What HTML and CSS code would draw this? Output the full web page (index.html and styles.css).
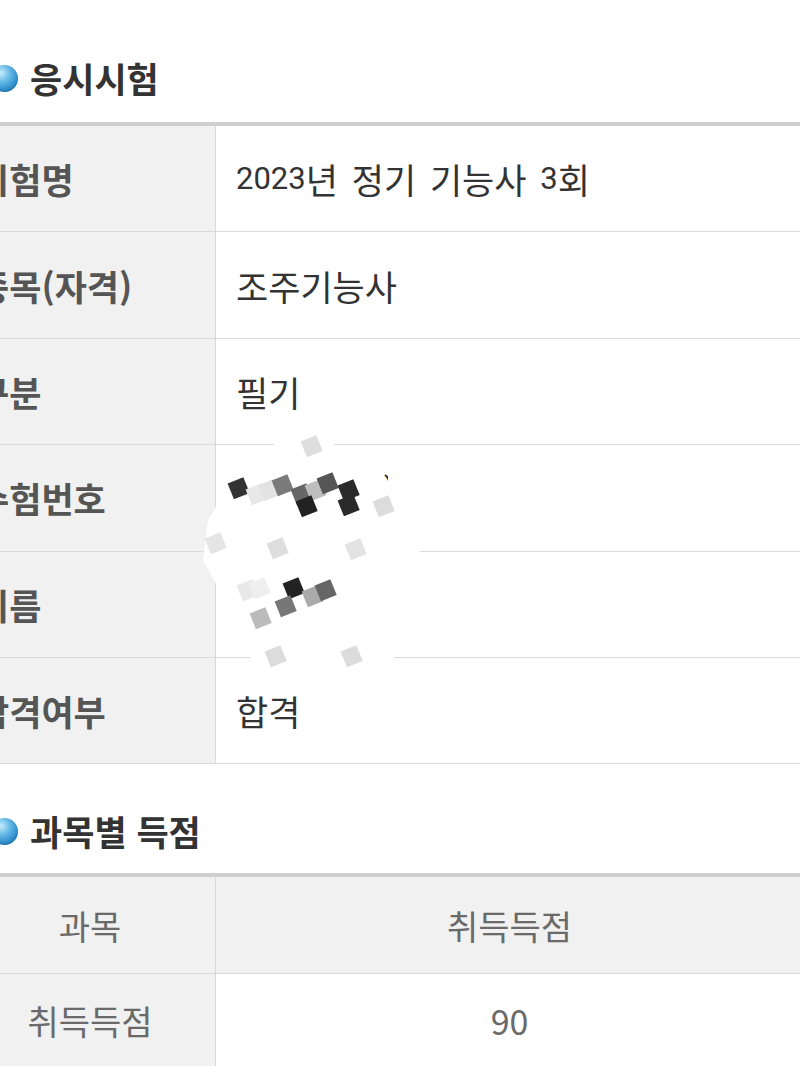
FILE: index.html
```html
<!DOCTYPE html>
<html lang="ko">
<head>
<meta charset="utf-8">
<title>응시시험</title>
<link rel="stylesheet" href="styles.css">
</head>
<body>
<div class="page">
  <section class="section">
    <h2 class="title"><span class="dot"></span>응시시험</h2>
    <div class="info">
      <div class="row"><div class="label">시험명</div><div class="value"><span class="num">2023</span>년 정기 기능사 <span class="num">3</span>회</div></div>
      <div class="row"><div class="label">종목(자격)</div><div class="value">조주기능사</div></div>
      <div class="row"><div class="label">구분</div><div class="value">필기</div></div>
      <div class="row"><div class="label">수험번호</div><div class="value"></div></div>
      <div class="row"><div class="label">이름</div><div class="value"></div></div>
      <div class="row"><div class="label">합격여부</div><div class="value">합격</div></div>
    </div>
  </section>
  <section class="section second">
    <h2 class="title"><span class="dot"></span>과목별 득점</h2>
    <div class="score">
      <div class="srow head"><div class="scell key">과목</div><div class="scell">취득득점</div></div>
      <div class="srow body"><div class="scell key">취득득점</div><div class="scell val">90</div></div>
    </div>
  </section>
</div>
<svg class="mosaic" width="800" height="1066" viewBox="0 0 800 1066" aria-hidden="true">
  <polygon fill="#ffffff" points="292,432 322,440 398,468 420,550 402,620 392,668 255,668 230,610 203,560 208,520 240,468"/>
  <text x="384" y="498" font-size="30" font-family="Roboto, sans-serif" fill="#222">)</text>
  <rect x="388" y="470" width="12" height="40" fill="#fff"/>
  <g>
    <rect x="230" y="480" width="17" height="17" fill="#333" transform="rotate(-22 238 488)"/>
    <rect x="248" y="486" width="17" height="17" fill="#e8e8e8" transform="rotate(-22 256 494)"/>
    <rect x="260" y="482" width="17" height="17" fill="#e3e3e3" transform="rotate(-22 268 490)"/>
    <rect x="274" y="477" width="17" height="17" fill="#7a7a7a" transform="rotate(-22 282 485)"/>
    <rect x="293" y="486" width="17" height="17" fill="#666" transform="rotate(-22 301 494)"/>
    <rect x="307" y="482" width="17" height="17" fill="#bdbdbd" transform="rotate(-22 315 490)"/>
    <rect x="319" y="475" width="17" height="17" fill="#555" transform="rotate(-22 327 483)"/>
    <rect x="298" y="498" width="17" height="17" fill="#222" transform="rotate(-22 306 506)"/>
    <rect x="340" y="482" width="17" height="17" fill="#2a2a2a" transform="rotate(-22 348 490)"/>
    <rect x="340" y="497" width="17" height="17" fill="#2a2a2a" transform="rotate(-22 348 505)"/>
    <rect x="375" y="498" width="17" height="17" fill="#dcdcdc" transform="rotate(-22 383 506)"/>
    <rect x="303" y="438" width="17" height="17" fill="#dedede" transform="rotate(-22 311 446)"/>
    <rect x="207" y="535" width="17" height="17" fill="#e5e5e5" transform="rotate(-22 215 543)"/>
    <rect x="269" y="540" width="17" height="17" fill="#dedede" transform="rotate(-22 277 548)"/>
    <rect x="347" y="541" width="17" height="17" fill="#e3e3e3" transform="rotate(-22 355 549)"/>
    <rect x="239" y="582" width="17" height="17" fill="#e8e8e8" transform="rotate(-22 247 590)"/>
    <rect x="251" y="580" width="17" height="17" fill="#efefef" transform="rotate(-22 259 588)"/>
    <rect x="285" y="580" width="17" height="17" fill="#222" transform="rotate(-22 293 588)"/>
    <rect x="277" y="598" width="17" height="17" fill="#777" transform="rotate(-22 285 606)"/>
    <rect x="304" y="588" width="17" height="17" fill="#aaa" transform="rotate(-22 312 596)"/>
    <rect x="317" y="582" width="17" height="17" fill="#666" transform="rotate(-22 325 590)"/>
    <rect x="252" y="610" width="17" height="17" fill="#bbb" transform="rotate(-22 260 618)"/>
    <rect x="267" y="648" width="17" height="17" fill="#dcdcdc" transform="rotate(-22 275 656)"/>
    <rect x="343" y="648" width="17" height="17" fill="#dcdcdc" transform="rotate(-22 351 656)"/>
  </g>
</svg>
</body>
</html>
```
FILE: styles.css
```css
html, body {
  margin: 0;
  padding: 0;
  background: #ffffff;
  overflow: hidden;
}

body {
  width: 800px;
  height: 1066px;
  font-family: "Noto Sans CJK KR", "Noto Sans", sans-serif;
}

.page {
  margin-left: -35px;
  width: 838px;
  padding-top: 58px;
}

.title {
  display: flex;
  align-items: center;
  gap: 12px;
  margin: 0 0 24px 26px;
  height: 40px;
  font-size: 35px;
  line-height: 40px;
  font-weight: 700;
  color: #333333;
}

.dot {
  display: block;
  flex: none;
  width: 27px;
  height: 27px;
  border-radius: 50%;
  background: radial-gradient(circle at 38% 30%, #c6ebfb 0%, #6bbde8 32%, #2a8bc9 70%, #1d6ea6 100%);
  box-shadow: inset 0 -1px 2px rgba(0, 0, 0, 0.18);
}

.info {
  border-top: 4px solid #cfcfcf;
}

.row {
  display: grid;
  grid-template-columns: 251px 1fr;
  height: 106.4px;
  box-sizing: border-box;
  border-bottom: 1px solid #dadada;
}

.label {
  display: flex;
  align-items: center;
  padding-left: 12px;
  background: #f1f1f1;
  border-right: 1px solid #d8d8d8;
  font-size: 35px;
  font-weight: 700;
  color: #555555;
  white-space: nowrap;
}

.value {
  display: flex;
  align-items: center;
  padding-left: 20px;
  font-family: "Noto Sans CJK KR", sans-serif;
  font-size: 35px;
  color: #333333;
  white-space: pre;
  word-spacing: 4px;
}

.num {
  font-family: Roboto, "Noto Sans CJK KR", sans-serif;
  font-size: 31px;
}

.second {
  margin-top: 47px;
}

.second .title {
  margin-bottom: 22px;
}

.score {
  border-top: 4px solid #cfcfcf;
}

.srow {
  display: grid;
  grid-template-columns: 251px 1fr;
  height: 97px;
  box-sizing: border-box;
  border-bottom: 1px solid #dadada;
}

.srow.head {
  background: #f1f1f1;
}

.srow.body {
  height: 92px;
  border-bottom: none;
}

.scell {
  display: flex;
  align-items: center;
  justify-content: center;
  font-size: 34px;
  color: #6a6a6a;
}

.scell.key {
  background: #f1f1f1;
  border-right: 1px solid #d8d8d8;
}

.mosaic {
  position: absolute;
  left: 0;
  top: 0;
  pointer-events: none;
}
```
